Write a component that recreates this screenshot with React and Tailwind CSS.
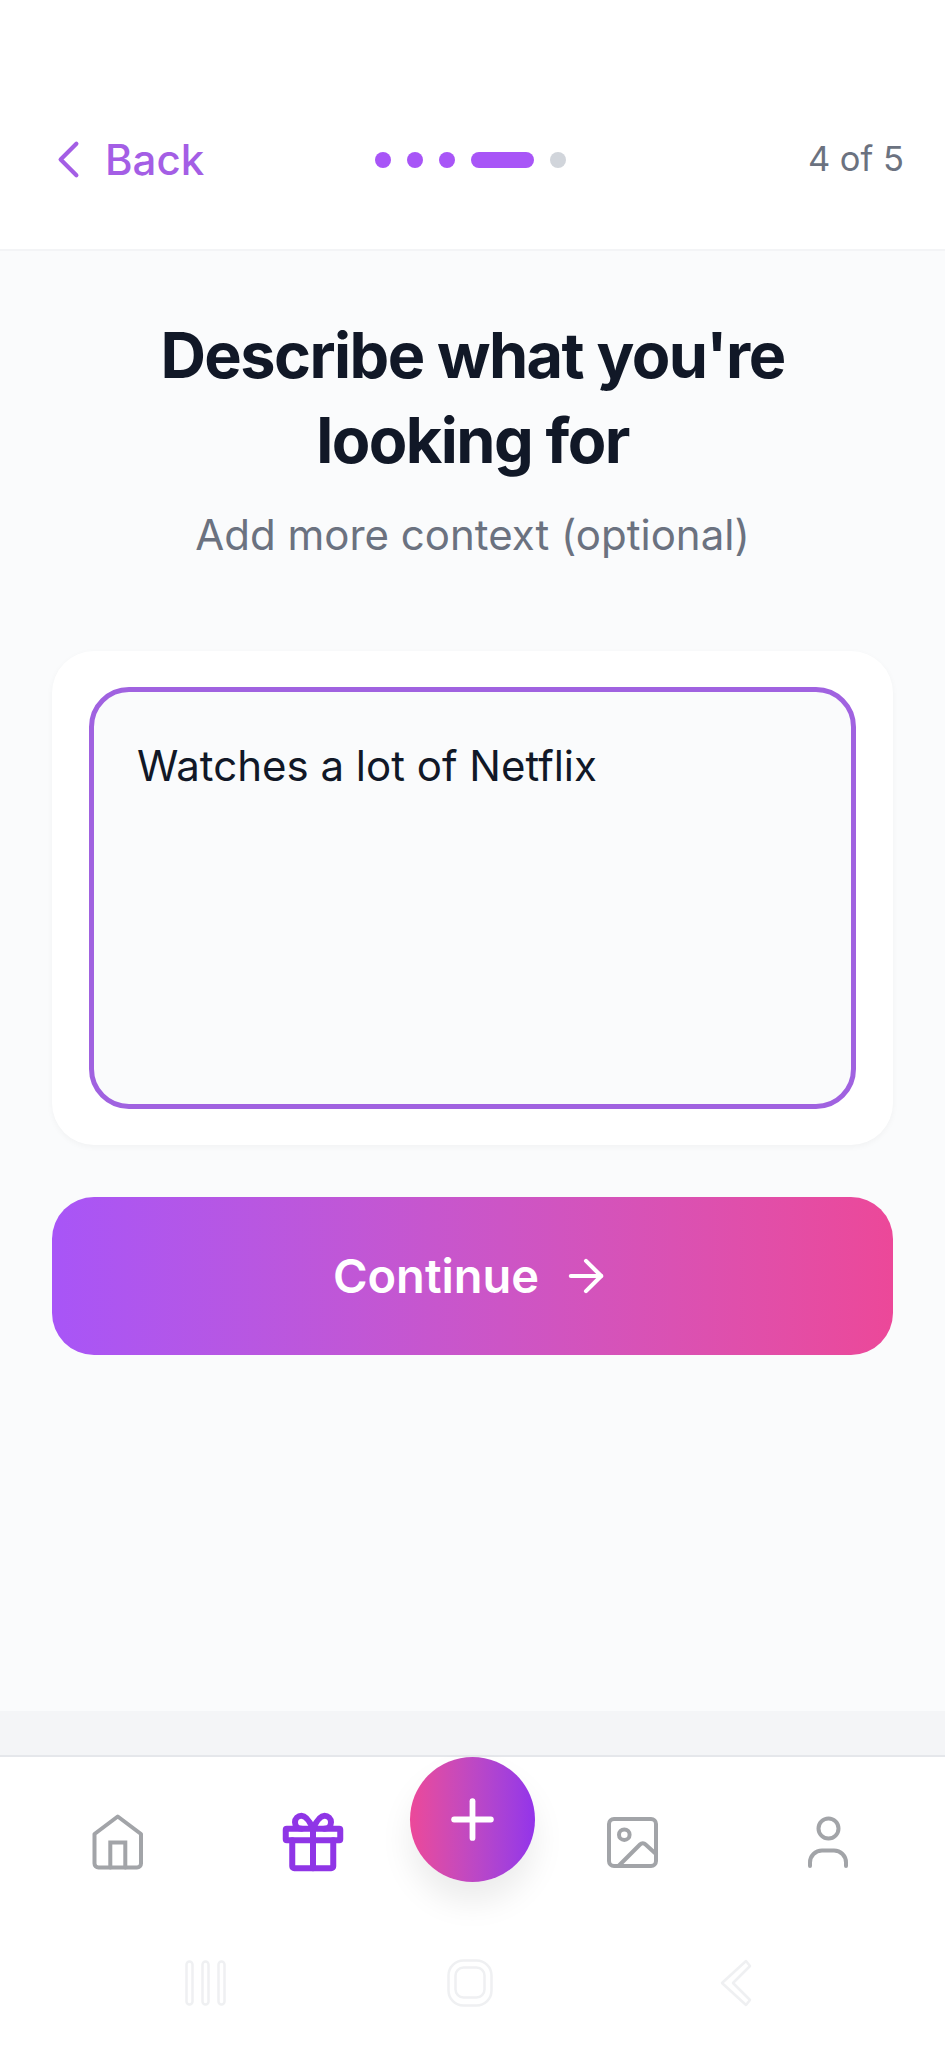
import { ChevronLeft, Plus, ArrowRight } from "lucide-react";

const font = { fontFamily: "Inter, sans-serif" };
const GRAY = "#a2a4a8";

function HomeIcon() {
  return (
    <svg width="63" height="63" viewBox="0 0 63 63" fill="none" stroke={GRAY} strokeWidth="4" strokeLinejoin="round" strokeLinecap="round">
      <path d="M31.75 5.5 L55 23 V52.5 a4 4 0 0 1 -4 4 H12.5 a4 4 0 0 1 -4 -4 V23 Z" />
      <path d="M24.3 56.5 V31.5 H39.3 V56.5" strokeLinejoin="miter" />
    </svg>
  );
}

function GiftIcon() {
  return (
    <svg className="ml-[2px]" width="68" height="68" viewBox="0 0 68 68" fill="none" stroke="#8f35e6" strokeWidth="6" strokeLinejoin="round" strokeLinecap="round">
      <rect x="6.75" y="20.75" width="54.5" height="11.5" rx="1" />
      <path d="M13.25 32.25 V58.25 a2 2 0 0 0 2 2 H52.25 a2 2 0 0 0 2 -2 V32.25" />
      <path d="M34 20.75 V60.25" />
      <path d="M34 20.75 C31 14 27 7.75 22.5 7.75 A6.5 6.5 0 0 0 22.5 20.75" />
      <path d="M34 20.75 C37 14 41 7.75 45.5 7.75 A6.5 6.5 0 0 1 45.5 20.75" />
    </svg>
  );
}

function PictureIcon() {
  return (
    <svg width="63" height="63" viewBox="0 0 63 63" fill="none" stroke={GRAY} strokeWidth="4" strokeLinejoin="round" strokeLinecap="round">
      <rect x="7" y="8" width="47" height="47" rx="5" />
      <circle cx="22.3" cy="23.7" r="5.3" />
      <path d="M16.5 55 L38 33.5 a4 4 0 0 1 5.6 0 L54 43" />
    </svg>
  );
}

function UserIcon() {
  return (
    <svg width="63" height="63" viewBox="0 0 63 63" fill="none" stroke={GRAY} strokeWidth="4" strokeLinejoin="round" strokeLinecap="round">
      <circle cx="31.5" cy="17.5" r="10" />
      <path d="M13 55 V51.5 a12 12 0 0 1 12 -12 H37 a12 12 0 0 1 12 12 V55" />
    </svg>
  );
}

export default function App() {
  return (
    <div style={font} className="h-[2048px] w-[945px] flex flex-col bg-white overflow-hidden">
      <header className="h-[251px] shrink-0 bg-white border-b-2 border-[#f3f4f6] grid grid-cols-[1fr_auto_1fr] items-center pt-[70px] pl-[37px] pr-[41px]">
        <div className="flex items-center text-[#a45ee5]">
          <ChevronLeft size={63} strokeWidth={1.6} />
          <span className="text-[42px] font-medium leading-none ml-[5px]">Back</span>
        </div>
        <div className="flex items-center gap-[16px]">
          <span className="w-[16px] h-[16px] rounded-full bg-[#a855f7]" />
          <span className="w-[16px] h-[16px] rounded-full bg-[#a855f7]" />
          <span className="w-[16px] h-[16px] rounded-full bg-[#a855f7]" />
          <span className="w-[63px] h-[16px] rounded-full bg-[#a855f7]" />
          <span className="w-[16px] h-[16px] rounded-full bg-[#d1d5db]" />
        </div>
        <span className="text-[34.5px] text-[#6b7280] leading-none text-right">4 of 5</span>
      </header>

      <main className="h-[1460px] shrink-0 bg-[#fafbfc] flex flex-col px-[52px] pt-[62px]">
        <h1 className="text-[63px] leading-[85px] font-bold text-[#111827] text-center tracking-tight">
          Describe what you're<br />looking for
        </h1>
        <p className="text-[42px] leading-[56px] text-[#6b7280] text-center mt-[24px]">Add more context (optional)</p>

        <div className="mt-[88px] h-[494px] bg-white rounded-[42px] shadow-[0_2px_6px_rgba(0,0,0,0.04)] px-[37px] py-[36px]">
          <textarea
            readOnly
            defaultValue="Watches a lot of Netflix"
            style={font}
            className="w-full h-full block resize-none bg-[#fafbfc] border-[5px] border-[#a062e0] rounded-[40px] px-[43px] py-[48px] text-[42px] leading-[52px] text-[#111827] outline-none"
          />
        </div>

        <button className="mt-[52px] h-[158px] rounded-[42px] bg-gradient-to-r from-[#a855f7] to-[#ec4899] flex items-center justify-center gap-[21px] text-white text-[47px] font-semibold">
          <span>Continue</span>
          <ArrowRight size={52} strokeWidth={1.9} />
        </button>
      </main>

      <div className="h-[44px] shrink-0 bg-[#f4f5f7]" />

      <nav className="flex-1 bg-white border-t-2 border-[#e5e7eb] flex flex-col">
        <div className="h-[170px] shrink-0 grid grid-cols-[234px_156px_165px_156px_234px] items-center justify-items-center">
          <HomeIcon />
          <GiftIcon />
          <div className="self-start w-[125px] h-[125px] rounded-full bg-gradient-to-r from-[#ec4899] to-[#9333ea] shadow-[0_20px_32px_rgba(0,0,0,0.08)] flex items-center justify-center text-white">
            <Plus size={63} strokeWidth={2.2} />
          </div>
          <PictureIcon />
          <UserIcon />
        </div>
        <div className="flex-1 flex items-center pb-[10px]">
          <svg className="ml-[185px]" width="41" height="46" viewBox="0 0 41 46" fill="none" stroke="#eff0f2" strokeWidth="2.5">
            <rect x="1.5" y="1.5" width="6" height="43" rx="3" />
            <rect x="17.5" y="1.5" width="6" height="43" rx="3" />
            <rect x="33.5" y="1.5" width="6" height="43" rx="3" />
          </svg>
          <svg className="ml-[221px]" width="46" height="48" viewBox="0 0 46 48" fill="none" stroke="#eff0f2" strokeWidth="2.5">
            <rect x="1.5" y="1.5" width="43" height="45" rx="15" />
            <rect x="8.5" y="8.5" width="29" height="30" rx="8" />
          </svg>
          <svg className="ml-[227px]" width="32" height="48" viewBox="0 0 32 48" fill="none" stroke="#eff0f2" strokeWidth="2.5" strokeLinejoin="round">
            <path d="M26 2 L2 24 L26 46 L30 41 L13 24 L30 7 Z" />
          </svg>
        </div>
      </nav>
    </div>
  );
}
